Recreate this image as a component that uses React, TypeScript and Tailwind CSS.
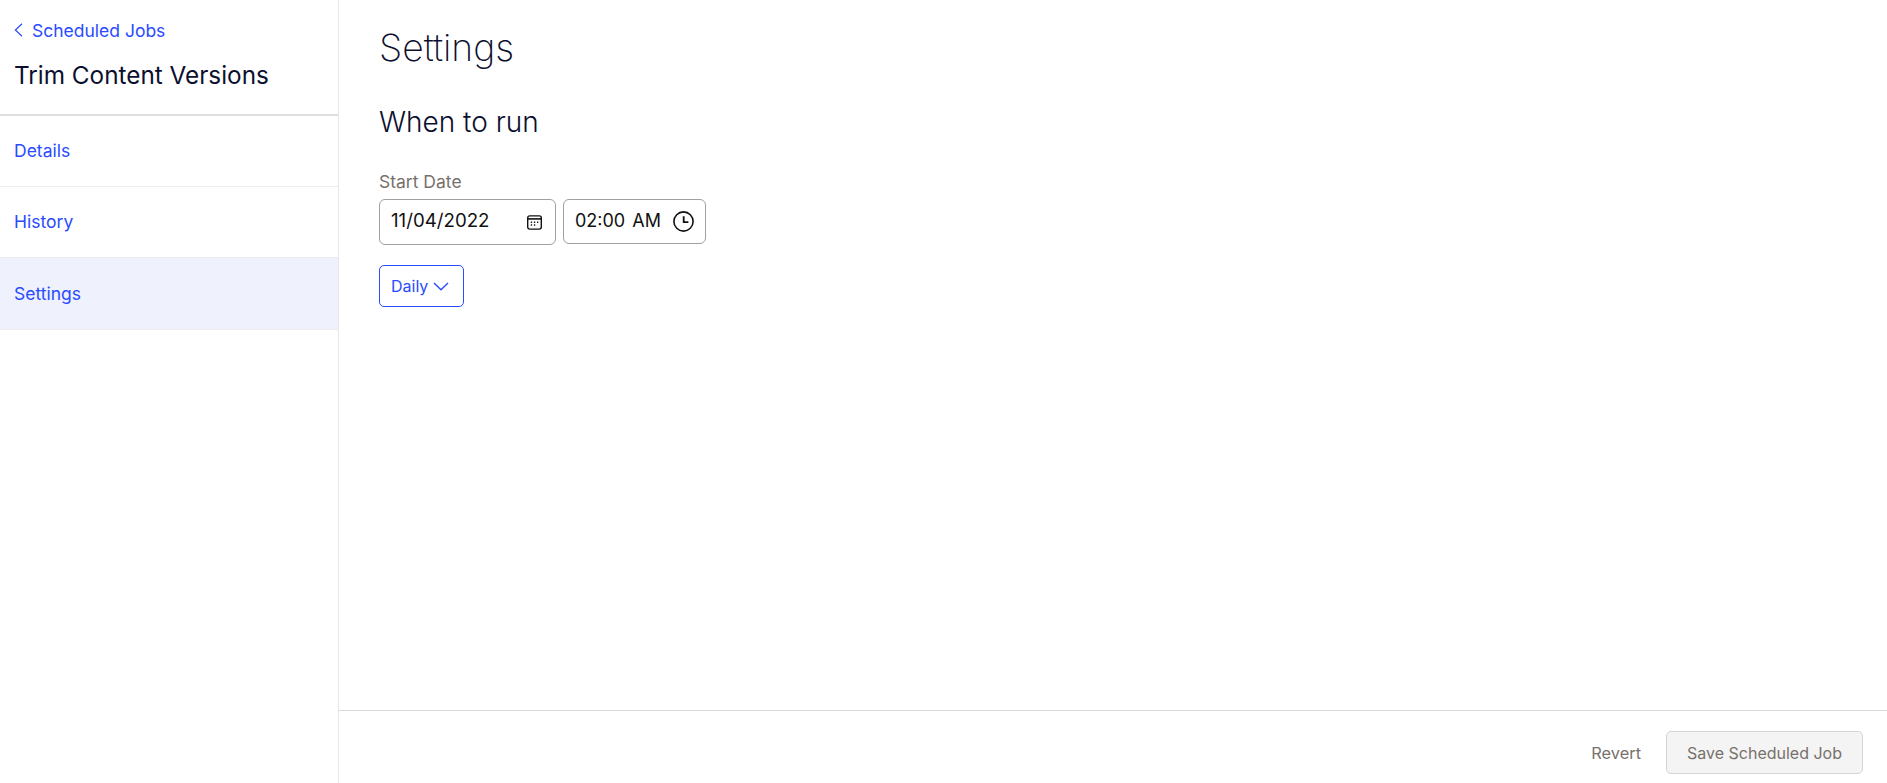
function CalendarIcon() {
  return (
    <svg width="15" height="15" viewBox="0 0 15 15" fill="none" className="text-[#111]">
      <rect x="0.7" y="0.9" width="13.6" height="13.2" rx="2" stroke="currentColor" strokeWidth="1.4" />
      <path d="M1 3.9h13" stroke="currentColor" strokeWidth="1.6" />
      <path d="M3.8 7.2h1.3M6.9 7.2h1.3M10 7.2h1.3M3.8 9.9h1.3M6.9 9.9h1.3" stroke="currentColor" strokeWidth="1.5" />
    </svg>
  )
}

function ClockIcon() {
  return (
    <svg width="21" height="21" viewBox="0 0 21 21" fill="none" className="text-[#111]">
      <circle cx="10.5" cy="10.5" r="9.6" stroke="currentColor" strokeWidth="1.6" />
      <path d="M10.7 5.2V11.2H15.4" stroke="currentColor" strokeWidth="1.8" />
    </svg>
  )
}

function NavItem({ label, active, height }: { label: string; active?: boolean; height: string }) {
  return (
    <a className={`flex items-center border-b border-[#ececec] pl-[14px] text-[17.5px] text-[#2a4bff] ${height} ${active ? "bg-[#eff1fd] pt-[1px]" : ""}`}>
      {label}
    </a>
  )
}

export default function App() {
  return (
    <div className="flex h-[783px] w-full overflow-hidden bg-white font-['Inter',sans-serif]">
      <aside className="w-[339px] shrink-0 border-r border-[#e6e6e6]">
        <div className="h-[116px] border-b-2 border-[#dedede] pl-[14px] pt-[21px]">
          <a className="flex h-[20px] items-center gap-[9px] text-[17.5px] text-[#2a4bff]">
            <svg width="9" height="14" viewBox="0 0 9 14" fill="none" className="-mt-[3px]">
              <path d="M8 0.7L1.4 7L8 13.3" stroke="currentColor" strokeWidth="1.2" />
            </svg>
            Scheduled Jobs
          </a>
          <h2 className="mt-[17px] text-[24.3px] font-normal leading-[34px] text-[#0c0f2e]">Trim Content Versions</h2>
        </div>
        <NavItem label="Details" height="h-[71px]" />
        <NavItem label="History" height="h-[71px]" />
        <NavItem label="Settings" height="h-[72px]" active />
      </aside>
      <main className="flex min-w-0 flex-1 flex-col">
        <div className="flex-1 pl-[40px] pt-[23px]">
          <h1 className="text-[37.3px] font-extralight leading-[50px] text-[#0c0f2e]">Settings</h1>
          <h2 className="mt-[30px] text-[28px] font-light leading-[38px] text-[#0c0f2e]">When to run</h2>
          <label className="mt-[30px] block text-[17.5px] leading-[22px] text-[#77716c]">Start Date</label>
          <div className="mt-[6px] flex items-start gap-[7px]">
            <div className="flex h-[46px] w-[177px] items-center justify-between rounded-[6px] border border-[#a0a0a0] pl-[11px] pr-[13px] text-[18.7px] text-[#111]">
              <span className="pb-[2px]">11/04/2022</span>
              <CalendarIcon />
            </div>
            <div className="flex h-[45px] w-[143px] items-center justify-between rounded-[6px] border border-[#a0a0a0] pl-[11px] pr-[11px] text-[18px] text-[#111]">
              <span className="pb-[2px] [word-spacing:2px]">02:00 AM</span>
              <ClockIcon />
            </div>
          </div>
          <button className="mt-[20px] flex h-[42px] w-[85px] items-center gap-[5px] rounded-[5px] border border-[#2a4bff] pl-[11px] text-[16px] text-[#2a4bff]">
            Daily
            <svg width="16" height="9" viewBox="0 0 16 9" fill="none" className="mt-[1px]">
              <path d="M1 1L8 7.8L15 1" stroke="currentColor" strokeWidth="1.4" />
            </svg>
          </button>
        </div>
        <footer className="flex h-[73px] items-center justify-end gap-[25px] border-t border-[#d9d9d9] pr-[24px] pt-[10px]">
          <span className="mt-[2px] text-[16.4px] text-[#77716c]">Revert</span>
          <button className="h-[43px] w-[197px] rounded-[5px] border border-[#d4d4d4] bg-[#f4f4f4] pt-[1px] text-[16px] text-[#77716c]">
            Save Scheduled Job
          </button>
        </footer>
      </main>
    </div>
  )
}
